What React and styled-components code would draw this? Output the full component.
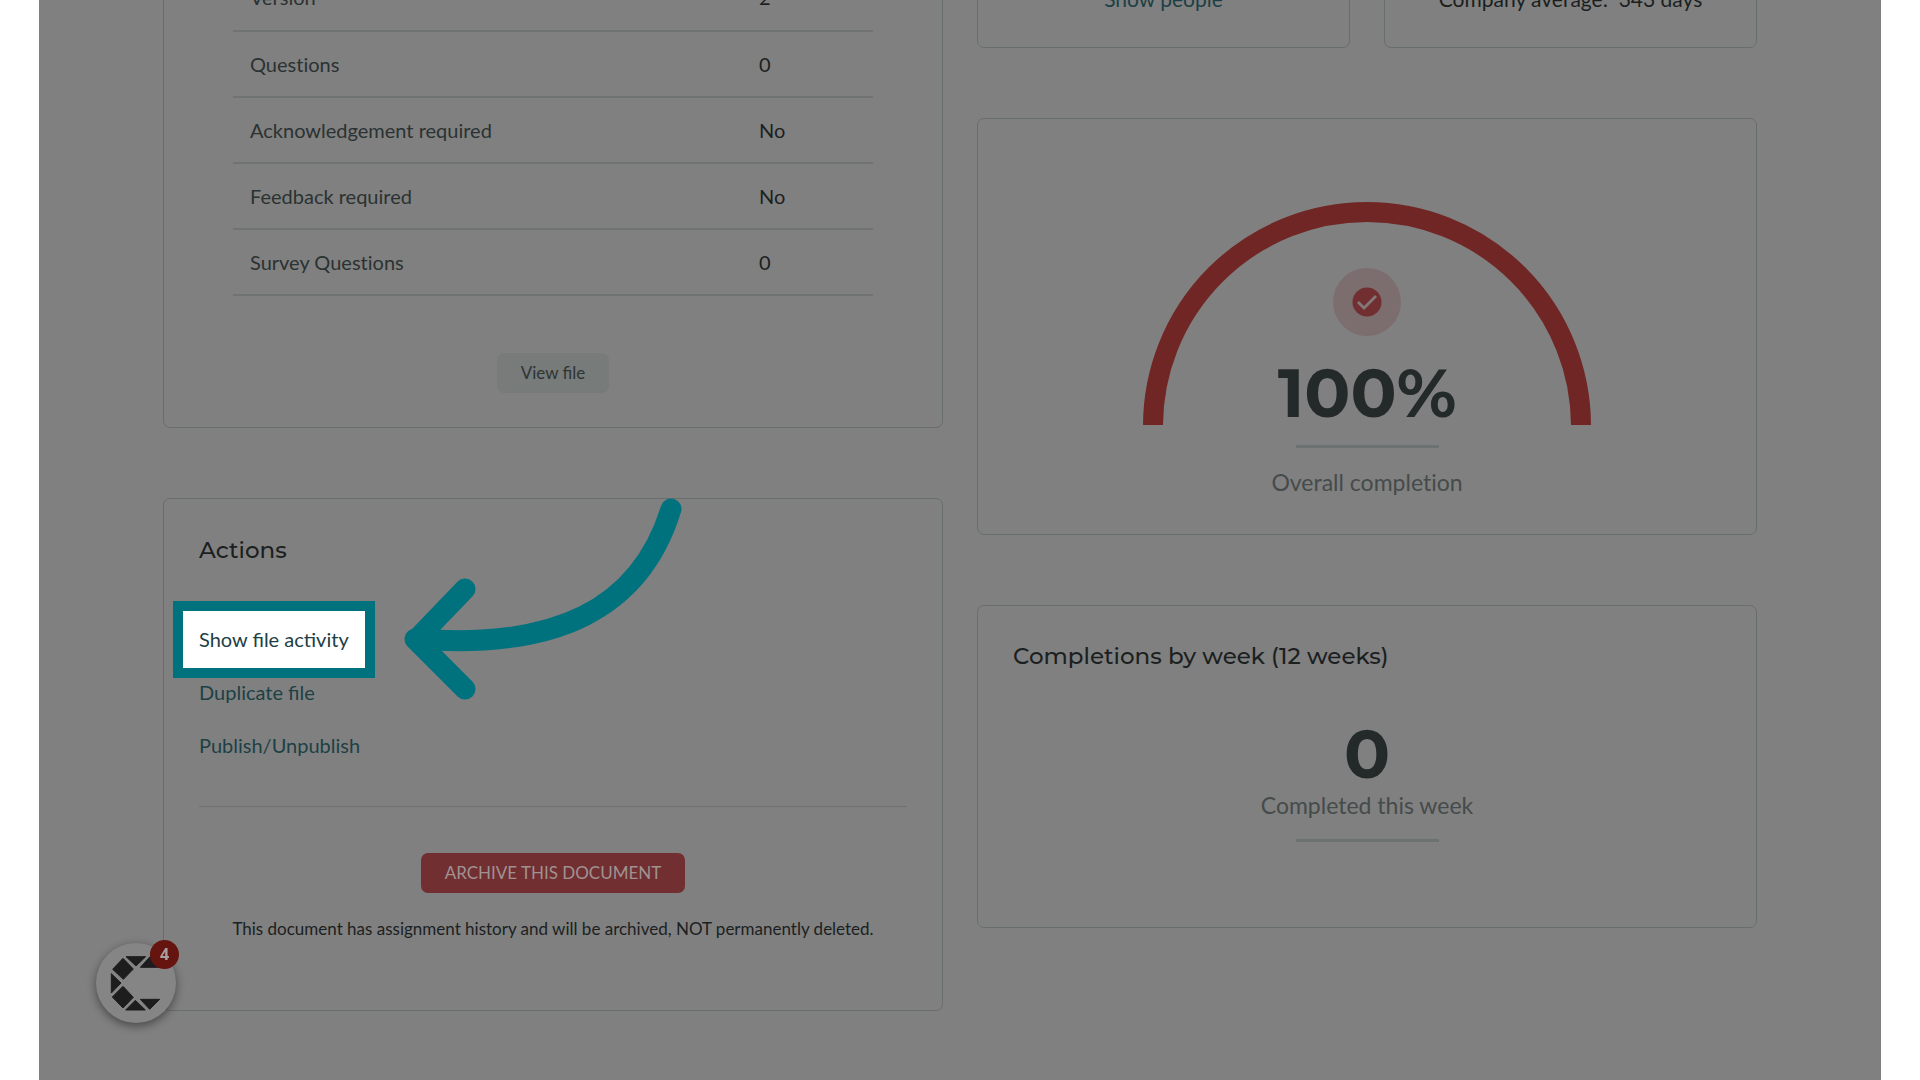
import React from "react"
import styled, { createGlobalStyle } from "styled-components"

const GlobalStyle = createGlobalStyle`
   :root {
      --stage-bg: #808080;
      --card-border: #686d6d;
      --text-primary: #1b1f1f;
      --text-label: #2b3232;
      --text-muted: #454b4b;
      --text-strong: #242a2a;
      --link: #1d4045;
      --accent: #00727e;
      --danger: #712f31;
      --gauge: #702624;
      --font-body: Lato, "Liberation Sans", sans-serif;
      --font-title: Montserrat, Inter, "Liberation Sans", sans-serif;
   }
   *, *::before, *::after {
      box-sizing: border-box;
   }
   body {
      margin: 0;
      background-color: #fff;
      font-family: var(--font-body);
      font-size: 20px;
      line-height: 25px;
      color: var(--text-primary);
   }
`

const Stage = styled.main`
   height: 100vh;
   margin: 0 39px;
   padding: 0 124px;
   overflow: hidden;
   background-color: var(--stage-bg);
`

/* the page is scrolled down, its first lines are above the window */
const Columns = styled.div`
   display: grid;
   grid-template-columns: 1fr 1fr;
   align-items: start;
   gap: 34px;
   margin-top: -86px;
`

const Column = styled.div`
   display: flex;
   flex-direction: column;
   gap: 70px;
`

const CardRow = styled.div`
   display: grid;
   grid-template-columns: 1fr 1fr;
   gap: 34px;
   font-size: 21px;
`

const Card = styled.section`
   position: relative;
   border: 1px solid var(--card-border);
   border-radius: 7px;
   padding: ${(props) => props.$padding || "35px"};
`

const CenterCard = styled(Card)`
   display: flex;
   flex-direction: column;
   align-items: center;
`

const Title = styled.h2`
   margin: 0;
   font-family: var(--font-title);
   font-size: 23px;
   line-height: 32px;
   font-weight: 500;
`

const FactTable = styled.table`
   width: 100%;
   border-collapse: collapse;
   table-layout: fixed;

   th,
   td {
      height: 66px;
      padding: 0 17px;
      border-bottom: 2px solid #707373;
      text-align: left;
      font-weight: 400;
   }
   th {
      width: 509px;
      color: var(--text-label);
      font-variant-ligatures: no-common-ligatures;
   }
`

const Button = styled.button`
   display: block;
   height: 40px;
   margin: 0 auto;
   padding: 0 24px;
   border: none;
   border-radius: 7px;
   font-family: var(--font-body);
   font-size: 17px;
   line-height: 24px;
   background-color: ${(props) => (props.$danger ? "var(--danger)" : "#777b7a")};
   color: ${(props) => (props.$danger ? "#a09292" : "#2f3434")};
   cursor: pointer;
`

const CardFooter = styled.div`
   padding-top: 57px;
`

const Link = styled.a`
   color: var(--link);
   text-decoration: none;
`

const ActionList = styled.ul`
   display: flex;
   flex-direction: column;
   align-items: flex-start;
   gap: 28px;
   margin: 61px 0 48px;
   padding: 0;
   list-style: none;

   li {
      display: flex;
   }
`

const HighlightLink = styled(Link)`
   margin: -16px;
   padding: 16px;
   background-color: #fff;
   box-shadow: 0 0 0 10px var(--accent);
`

const Divider = styled.hr`
   width: 100%;
   height: 1px;
   margin: 0 0 46px;
   border: none;
   background-color: #6e7171;
`

const Note = styled.p`
   margin: 24px 0 0;
   font-size: 17px;
   line-height: 24px;
   text-align: center;
`

const Arrow = styled.svg`
   position: absolute;
   left: 236px;
   top: -4px;
   width: 290px;
   height: 215px;
   pointer-events: none;
`

const Gauge = styled.div`
   display: grid;
   justify-items: center;

   > * {
      grid-area: 1 / 1;
   }
`

const GaugeInner = styled.div`
   display: flex;
   flex-direction: column;
   align-items: center;
   gap: 20px;
   padding-top: 66px;
`

const BigNumber = styled.strong`
   font-family: var(--font-title);
   font-size: 68px;
   line-height: 74px;
   font-weight: 700;
   color: var(--text-strong);
`

const Rule = styled.span`
   width: 143px;
   height: 3px;
   margin: ${(props) => props.$margin};
   background-color: #6c7171;
`

const Caption = styled.p`
   margin: 0;
   font-size: 23px;
   line-height: 28px;
   font-variant-ligatures: no-common-ligatures;
   color: var(--text-muted);
`

const Stat = styled.div`
   display: flex;
   flex-direction: column;
   align-items: center;
   padding-top: 45px;
`

const ChatButton = styled.button`
   position: fixed;
   left: 96px;
   bottom: 57px;
   width: 80px;
   height: 80px;
   padding: 0;
   border: none;
   border-radius: 50%;
   background-color: #858585;
   box-shadow: 0 3px 10px rgb(0 0 0 / 45%);
   cursor: pointer;

   svg {
      display: block;
   }
`

const Badge = styled.span`
   position: absolute;
   top: -3px;
   right: -3px;
   width: 29px;
   height: 29px;
   border-radius: 50%;
   background-color: #66140f;
   color: #a6a0a0;
   font-family: "Open Sans", sans-serif;
   font-size: 16px;
   line-height: 29px;
   font-weight: 700;
`

const facts = [
   { label: "Version", value: "2" },
   { label: "Questions", value: "0" },
   { label: "Acknowledgement required", value: "No" },
   { label: "Feedback required", value: "No" },
   { label: "Survey Questions", value: "0" },
]

const FileCard = () => {
   return (
      <Card $padding="50px 69px 34px">
         <FactTable>
            <tbody>
               {facts.map((item) => (
                  <tr key={item.label}>
                     <th scope="row">{item.label}</th>
                     <td>{item.value}</td>
                  </tr>
               ))}
            </tbody>
         </FactTable>
         <CardFooter>
            <Button type="button">View file</Button>
         </CardFooter>
      </Card>
   )
}

const ActionsCard = () => {
   return (
      <Card $padding="35px 35px 69px">
         <Title>Actions</Title>
         <ActionList>
            <li>
               <HighlightLink href="#activity">Show file activity</HighlightLink>
            </li>
            <li>
               <Link href="#duplicate">Duplicate file</Link>
            </li>
            <li>
               <Link href="#publish">Publish/Unpublish</Link>
            </li>
         </ActionList>
         <Divider />
         <Button type="button" $danger>
            ARCHIVE THIS DOCUMENT
         </Button>
         <Note>This document has assignment history and will be archived, NOT permanently deleted.</Note>
         <Arrow
            viewBox="400 495 290 215"
            fill="none"
            stroke="#00727e"
            strokeWidth="21"
            strokeLinecap="round"
            strokeLinejoin="round"
            aria-hidden="true"
         >
            <path d="M671 509C640 610 555 650 415 639" />
            <path d="M465 589L416 640L465 689" />
         </Arrow>
      </Card>
   )
}

const CompletionGauge = () => {
   return (
      <CenterCard $padding="83px 35px 38px">
         <Gauge>
            <svg width="448" height="223" viewBox="0 0 448 223" fill="none" aria-hidden="true">
               <circle cx="224" cy="224" r="214" stroke="#702624" strokeWidth="20" />
            </svg>
            <GaugeInner>
               <svg width="68" height="68" viewBox="-34 -34 68 68" fill="none" aria-hidden="true">
                  <circle r="34" fill="#7c6e6e" />
                  <circle r="14.500" fill="#712f31" />
                  <path d="M-9 0L-3 6L9 -6" stroke="#857878" strokeWidth="2.800" />
               </svg>
               <BigNumber>100%</BigNumber>
            </GaugeInner>
         </Gauge>
         <Rule $margin="15px 0 20px" />
         <Caption>Overall completion</Caption>
      </CenterCard>
   )
}

const ChatWidget = () => {
   return (
      <ChatButton type="button" aria-label="Open help, 4 new">
         <svg
            width="80"
            height="80"
            viewBox="48 69 240 240"
            fill="#1d1d1d"
            stroke="#1d1d1d"
            strokeWidth="3"
            strokeLinejoin="round"
            aria-hidden="true"
         >
            <path d="M138 110H197L168 138Z" />
            <path d="M210 110L240 110V142H181Z" />
            <path d="M129 115L160 147L130 178L98 148Z" />
            <path d="M94 161L123 189L94 219Z" />
            <path d="M129 199L160 232L129 264L97 231Z" />
            <path d="M166 241L196 270H137Z" />
            <path d="M181 238H239L209 268Z" />
         </svg>
         <Badge>4</Badge>
      </ChatButton>
   )
}

const App = () => {
   return (
      <>
         <GlobalStyle />
         <Stage>
            <Columns>
               <Column>
                  <FileCard />
                  <ActionsCard />
               </Column>
               <Column>
                  <CardRow>
                     <CenterCard $padding="71px 20px 36px">
                        <Link href="#people">Show people</Link>
                     </CenterCard>
                     <CenterCard $padding="71px 20px 36px">
                        <span>Company average:&nbsp; 343 days</span>
                     </CenterCard>
                  </CardRow>
                  <CompletionGauge />
                  <Card $padding="34px 35px 85px">
                     <Title>Completions by week (12 weeks)</Title>
                     <Stat>
                        <BigNumber>0</BigNumber>
                        <Caption>Completed this week</Caption>
                        <Rule $margin="20px 0 0" />
                     </Stat>
                  </Card>
               </Column>
            </Columns>
         </Stage>
         <ChatWidget />
      </>
   )
}

export default App
